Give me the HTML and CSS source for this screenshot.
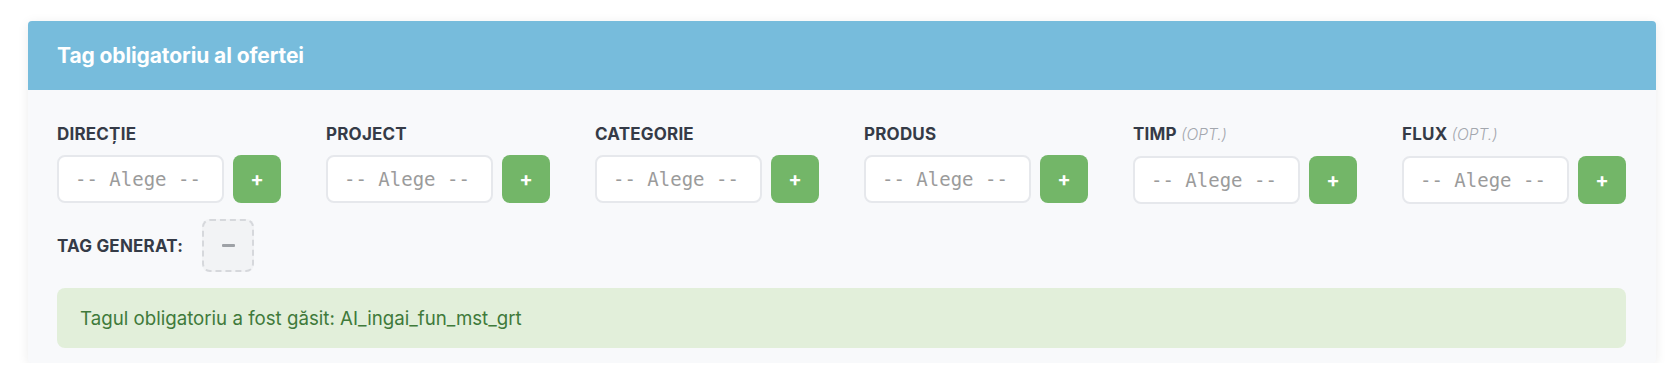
FILE: index.html
```html
<!DOCTYPE html>
<html lang="ro">
<head>
<meta charset="utf-8">
<title>Tag obligatoriu al ofertei</title>
<link rel="stylesheet" href="styles.css">
</head>
<body>
<div class="page">
  <section class="card">
    <header class="card-header">
      <h2 class="card-title">Tag obligatoriu al ofertei</h2>
    </header>
    <div class="card-body">
      <div class="fields">
        <div class="field">
          <div class="field-label">DIRECȚIE</div>
          <div class="field-controls">
            <div class="select">-- Alege --</div>
            <button class="add-btn" type="button">+</button>
          </div>
        </div>
        <div class="field">
          <div class="field-label">PROJECT</div>
          <div class="field-controls">
            <div class="select">-- Alege --</div>
            <button class="add-btn" type="button">+</button>
          </div>
        </div>
        <div class="field">
          <div class="field-label">CATEGORIE</div>
          <div class="field-controls">
            <div class="select">-- Alege --</div>
            <button class="add-btn" type="button">+</button>
          </div>
        </div>
        <div class="field">
          <div class="field-label">PRODUS</div>
          <div class="field-controls">
            <div class="select">-- Alege --</div>
            <button class="add-btn" type="button">+</button>
          </div>
        </div>
        <div class="field">
          <div class="field-label">TIMP <span class="opt">(OPT.)</span></div>
          <div class="field-controls">
            <div class="select">-- Alege --</div>
            <button class="add-btn" type="button">+</button>
          </div>
        </div>
        <div class="field">
          <div class="field-label">FLUX <span class="opt">(OPT.)</span></div>
          <div class="field-controls">
            <div class="select">-- Alege --</div>
            <button class="add-btn" type="button">+</button>
          </div>
        </div>
      </div>
      <div class="tag-row">
        <span class="tag-label">TAG GENERAT:</span>
        <div class="tag-box"><span class="tag-dash"></span></div>
      </div>
      <div class="alert">Tagul obligatoriu a fost găsit: AI_ingai_fun_mst_grt</div>
    </div>
  </section>
</div>
</body>
</html>
```
FILE: styles.css
```css
* { box-sizing: border-box; }
html, body { margin: 0; padding: 0; background: #ffffff; }
body { font-family: Inter, "Noto Sans", "Liberation Sans", sans-serif; }

.page { padding: 21px 24px 0 28px; }

.card {
  background: #f8f9fb;
  border-radius: 4px;
  box-shadow: 0 2px 12px rgba(0, 0, 0, 0.08);
  overflow: hidden;
}

.card-header {
  background: #77bcdc;
  height: 69px;
  display: flex;
  align-items: center;
  padding: 0 29px;
}

.card-title {
  margin: 0;
  color: #ffffff;
  font-size: 21px;
  font-weight: 700;
  letter-spacing: -0.1px;
}

.card-body {
  padding: 33px 30px 15px 29px;
  display: flex;
  flex-direction: column;
}

.fields {
  display: grid;
  grid-template-columns: repeat(6, 1fr);
  column-gap: 45px;
}

.field-label {
  font-size: 17px;
  line-height: 22px;
  font-weight: 700;
  letter-spacing: 0.2px;
  color: #353b47;
  margin-bottom: 10px;
  white-space: nowrap;
}

.opt {
  font-weight: 300;
  font-style: italic;
  font-size: 15.5px;
  letter-spacing: 0;
  color: #a3a7ae;
}

.field-controls {
  display: flex;
  gap: 9px;
}

.select {
  flex: 1;
  height: 48px;
  background: #ffffff;
  border: 2px solid #e6e8ec;
  border-radius: 8px;
  padding: 0 16px;
  display: flex;
  align-items: center;
  font-family: "DejaVu Sans Mono", "Liberation Mono", monospace;
  font-size: 19px;
  color: #9b9b9b;
  white-space: nowrap;
}

.add-btn {
  width: 48px;
  height: 48px;
  border: 0;
  border-radius: 8px;
  background: #73b668;
  color: #ffffff;
  font-family: Inter, sans-serif;
  font-size: 20px;
  font-weight: 700;
  padding: 0;
  display: flex;
  align-items: center;
  justify-content: center;
}

.tag-row {
  margin-top: 15px;
  display: flex;
  align-items: center;
  gap: 19px;
}

.tag-label {
  font-size: 17px;
  font-weight: 700;
  letter-spacing: 0.2px;
  color: #353b47;
}

.tag-box {
  width: 52px;
  height: 53px;
  border: 2px dashed #d6d8dc;
  border-radius: 8px;
  background: #f2f3f5;
  display: flex;
  align-items: center;
  justify-content: center;
}

.tag-dash {
  width: 13px;
  height: 3px;
  border-radius: 1px;
  background: #9ea1a6;
}

.alert {
  margin-top: 16px;
  height: 60px;
  background: #e2efda;
  border-radius: 8px;
  padding: 0 23px;
  display: flex;
  align-items: center;
  color: #3f7a3b;
  font-size: 18.7px;
}
```
